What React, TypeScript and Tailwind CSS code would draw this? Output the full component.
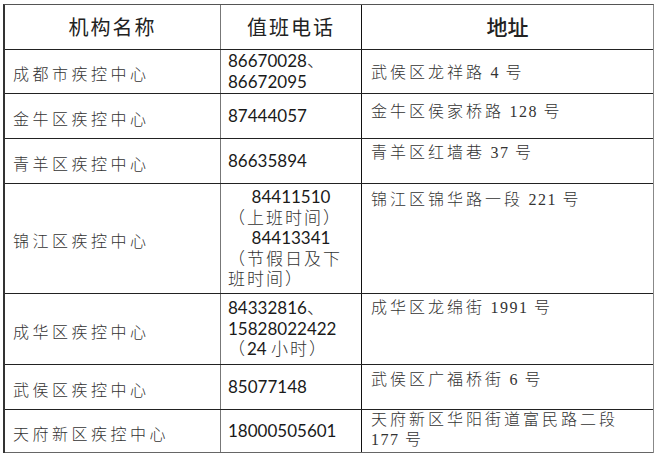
import React from 'react'

type Row = {
    name: string
    phone: string[]
    phoneAlign?: string[]
    address: string[]
    rowH: string
    addrCls: string
}

const rows: Row[] = [
    { name: '成都市疾控中心', phone: ['86670028、', '86672095'], address: ['武侯区龙祥路 4 号'], rowH: 'h-[44px]', addrCls: 'justify-center pt-[3px]' },
    { name: '金牛区疾控中心', phone: ['87444057'], address: ['金牛区侯家桥路 128 号'], rowH: 'h-[45px]', addrCls: 'pt-[8px]' },
    { name: '青羊区疾控中心', phone: ['86635894'], address: ['青羊区红墙巷 37 号'], rowH: 'h-[45px]', addrCls: 'pt-[4px]' },
    {
        name: '锦江区疾控中心',
        phone: ['84411510', '（上班时间）', '84413341', '（节假日及下', '班时间）'],
        phoneAlign: ['text-center', 'text-left', 'text-center', 'text-left', 'text-left'],
        address: ['锦江区锦华路一段 221 号'],
        rowH: 'h-[110px]',
        addrCls: 'pt-[6px]',
    },
    { name: '成华区疾控中心', phone: ['84332816、', '15828022422', '（24 小时）'], address: ['成华区龙绵街 1991 号'], rowH: 'h-[71px]', addrCls: 'pt-[4px]' },
    { name: '武侯区疾控中心', phone: ['85077148'], address: ['武侯区广福桥街 6 号'], rowH: 'h-[45px]', addrCls: 'pt-[5px]' },
    { name: '天府新区疾控中心', phone: ['18000505601'], address: ['天府新区华阳街道富民路二段', '177 号'], rowH: 'h-[43px]', addrCls: 'pt-[0px] leading-[19px]' },
]

// digits and CJK get different letter spacing
function Mixed({ text, cjkCls, numCls }: { text: string; cjkCls: string; numCls: string }) {
    const parts = text.split(/(\s?\d+\s?)/).filter(Boolean)
    return (
        <>
            {parts.map((p, k) =>
                /\d/.test(p) ? (
                    <span key={k} className={`whitespace-pre ${numCls}`}>{p}</span>
                ) : (
                    <span key={k} className={cjkCls}>{p}</span>
                )
            )}
        </>
    )
}

export default function App() {
    return (
        <div className="w-[660px] h-[459px] bg-white pt-[4px] pl-[3px]">
            <div className="w-[651px] border-t border-t-[#555] border-l-2 border-l-[#333] border-r border-r-[#888] text-[#222]">
                {/* header */}
                <div className="flex h-[45px] border-b border-b-[#222]">
                    <div className="w-[216px] shrink-0 border-r border-r-[#777] flex items-center justify-center text-[20px] tracking-[2px] font-['Noto_Sans_CJK_SC',sans-serif]">
                        机构名称
                    </div>
                    <div className="w-[141px] shrink-0 border-r border-r-[#111] flex items-center justify-center text-[20px] tracking-[2px] font-['Noto_Sans_CJK_SC',sans-serif]">
                        值班电话
                    </div>
                    <div className="flex-1 flex items-center justify-center text-[21px] font-medium font-['Noto_Sans_CJK_SC',sans-serif]">
                        地址
                    </div>
                </div>

                {rows.map((r, i) => (
                    <div key={i} className={`flex ${r.rowH} ${i === rows.length - 1 ? 'border-b border-b-[#666]' : 'border-b border-b-[#222]'}`}>
                        <div className="w-[216px] shrink-0 border-r border-r-[#777] flex items-center pl-[8px] pt-[3px] text-[16px] font-light tracking-[3.5px] text-[#333] font-['Noto_Sans_CJK_SC',sans-serif]">
                            {r.name}
                        </div>
                        <div className="w-[141px] shrink-0 border-r border-r-[#111] flex flex-col justify-center px-[7px] text-[17px] leading-[20.5px] text-[#1a1a1a] font-['Lato','Noto_Sans_CJK_SC',sans-serif]">
                            {r.phone.map((p, j) => (
                                <div key={j} className={`whitespace-nowrap ${r.phoneAlign ? r.phoneAlign[j] : ''}`}>
                                    <Mixed text={p} cjkCls="font-light text-[#333] tracking-[2px]" numCls="tracking-normal" />
                                </div>
                            ))}
                        </div>
                        <div className={`flex-1 flex flex-col pl-[9px] text-[16px] leading-[20px] font-light text-[#333] font-['Liberation_Serif','Noto_Sans_CJK_SC',serif] ${r.addrCls}`}>
                            {r.address.map((a, j) => (
                                <div key={j} className="whitespace-nowrap">
                                    <Mixed text={a} cjkCls="tracking-[3px]" numCls="tracking-[1.5px]" />
                                </div>
                            ))}
                        </div>
                    </div>
                ))}
            </div>
        </div>
    )
}
